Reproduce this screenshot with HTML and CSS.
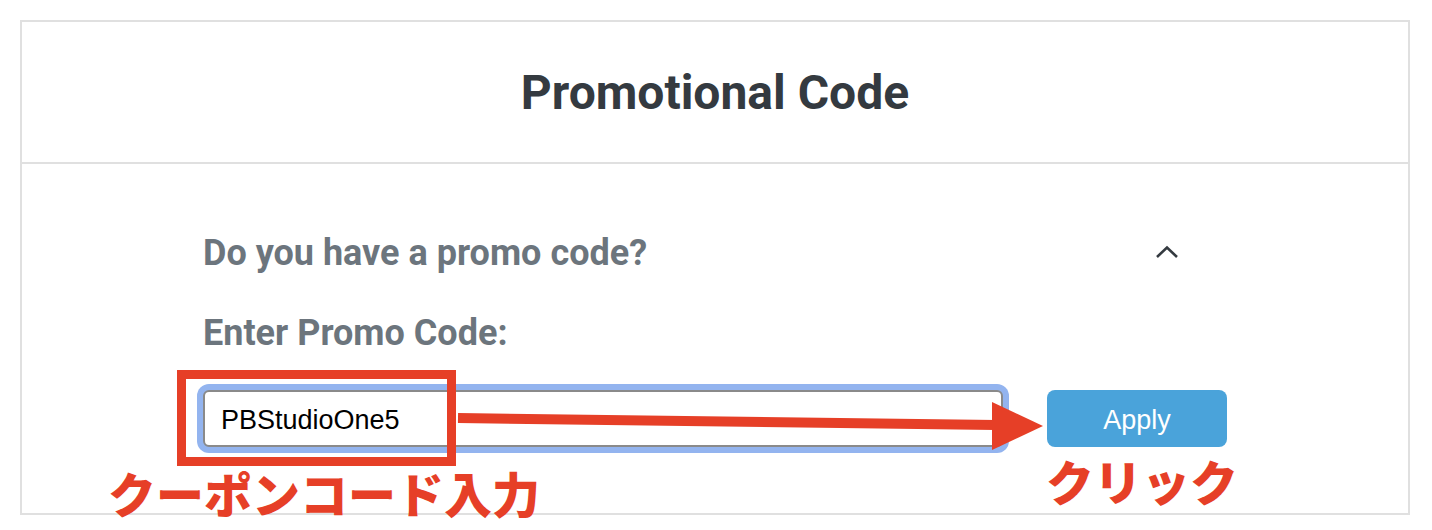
FILE: index.html
```html
<!DOCTYPE html>
<html lang="en">
	<head>
		<meta charset="UTF-8" />
		<meta name="viewport" content="width=device-width, initial-scale=1.0" />
		<title>Promotional Code</title>
		<link rel="stylesheet" href="styles.css">
	</head>

	<body>
		<div class="page">
			<div class="card">
				<div class="card-header">
					<h1>Promotional Code</h1>
				</div>
				<div class="card-body">
					<div class="promo">
						<div class="promo-toggle">
							<h2>Do you have a promo code?</h2>
							<svg class="chevron" width="24" height="14" viewBox="0 0 24 14">
								<path d="M2 12 L12 2.5 L22 12" fill="none" stroke="#343a40" stroke-width="2.6" />
							</svg>
						</div>
						<label for="promoCode">Enter Promo Code:</label>
						<div class="promo-row">
							<input type="text" id="promoCode" value="PBStudioOne5" />
							<button id="applyBtn">Apply</button>
						</div>
					</div>
				</div>
			</div>

			<!-- annotation overlay -->
			<div class="mark-box"></div>
			<svg class="mark-arrow" width="1432" height="530" viewBox="0 0 1432 530">
				<path d="M458 418 L996 425" stroke="#e63f27" stroke-width="10" />
				<polygon points="992,402 992,450 1043,426" fill="#e63f27" />
			</svg>
			<span class="mark-text mark-input">クーポンコード入力</span>
			<span class="mark-text mark-click">クリック</span>
		</div>
	</body>
</html>
```

FILE: styles.css
```css
body {
	margin: 0;
	font-family: Roboto, 'Liberation Sans', sans-serif;
	background-color: white;
}
.page {
	position: relative;
	padding: 20px;
	height: 530px;
	box-sizing: border-box;
}
.card {
	width: 1390px;
	height: 495px;
	box-sizing: border-box;
	border: 2px solid #e0e0e0;
	background: white;
}
.card-header {
	height: 140px;
	display: flex;
	align-items: center;
	justify-content: center;
	border-bottom: 2px solid #e0e0e0;
}
.card-header h1 {
	margin: 0;
	font-size: 48px;
	font-weight: bold;
	color: #343a40;
}
.card-body {
	padding-top: 67px;
}
.promo {
	width: 1024px;
	margin: 0 auto;
}
.promo-toggle {
	display: flex;
	align-items: center;
	justify-content: space-between;
	padding-right: 48px;
	height: 44px;
}
.promo-toggle h2 {
	margin: 0;
	font-size: 36px;
	line-height: 44px;
	font-weight: bold;
	color: #6c757d;
}
.chevron {
	display: block;
	margin-top: -2px;
}
label {
	display: block;
	margin-top: 36px;
	font-size: 36px;
	line-height: 44px;
	font-weight: bold;
	color: #6c757d;
}
.promo-row {
	display: flex;
	align-items: center;
	margin-top: 35px;
}
input[type='text'] {
	width: 800px;
	height: 57px;
	box-sizing: border-box;
	padding: 4px 16px 0;
	border: 2px solid #8a8a8a;
	border-radius: 6px;
	box-shadow: 0 0 0 6px #93b4ef;
	font-family: 'Liberation Sans', Arial, sans-serif;
	font-size: 27px;
	color: black;
	outline: none;
}
button {
	margin-left: 44px;
	width: 180px;
	height: 57px;
	padding-top: 4px;
	border: none;
	border-radius: 8px;
	background-color: #4aa3da;
	color: white;
	font-family: 'Liberation Sans', Arial, sans-serif;
	font-size: 27px;
	cursor: pointer;
}
.mark-box {
	position: absolute;
	left: 177px;
	top: 370px;
	width: 279px;
	height: 96px;
	box-sizing: border-box;
	border: 9px solid #e63f27;
}
.mark-arrow {
	position: absolute;
	left: 0;
	top: 0;
}
.mark-text {
	position: absolute;
	font-family: 'Noto Sans CJK JP', sans-serif;
	font-size: 48px;
	line-height: 48px;
	font-weight: 900;
	color: #e63f27;
	white-space: nowrap;
}
.mark-input {
	left: 108px;
	top: 468px;
}
.mark-click {
	left: 1046px;
	top: 456px;
}
```
